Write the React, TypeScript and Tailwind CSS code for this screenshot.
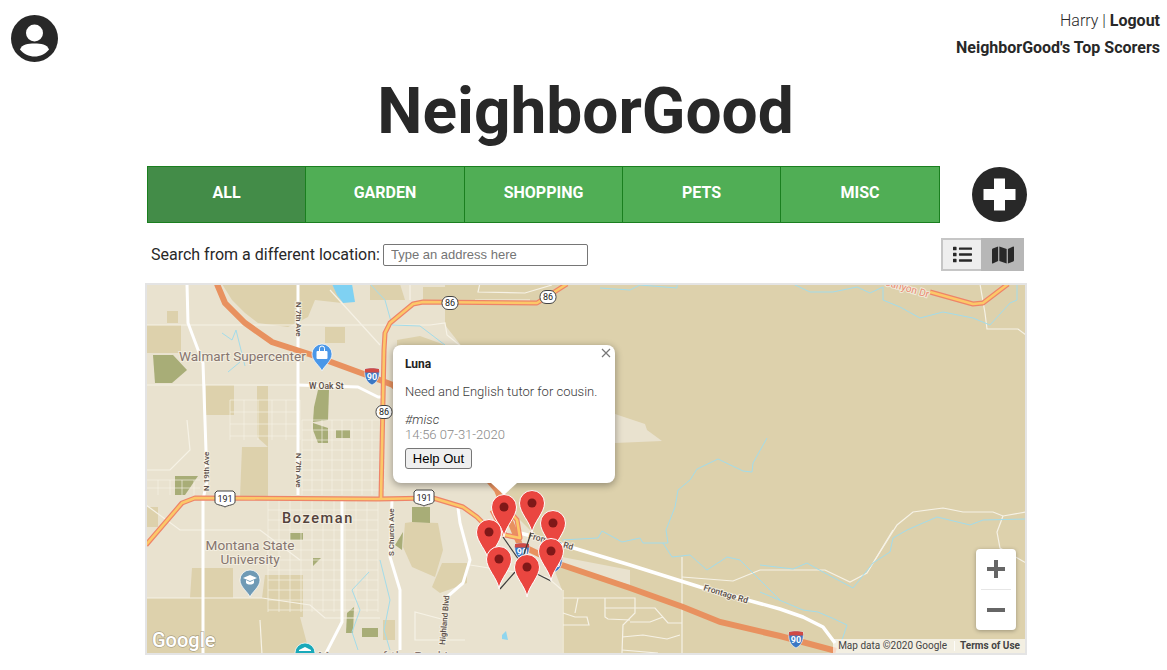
import { FaList, FaMap } from "react-icons/fa";

const CATEGORIES = ["All", "Garden", "Shopping", "Pets", "Misc"];

const TAN = "#ddd1ac";
const LIGHT = "#e9e2cf";
const PARK = "#a8ad77";
const MINOR = "#f6f2e6";
const WATER = "#a3dcea";

const line = (pts: number[][]) => "M" + pts.map((p) => p.join(" ")).join("L");

// street grid for a block of the town
const grid = (x0: number, x1: number, y0: number, y1: number, dx: number, dy: number) => {
  let d = "";
  for (let x = x0; x <= x1; x += dx) d += `M${x} ${y0}V${y1}`;
  for (let y = y0; y <= y1; y += dy) d += `M${x0} ${y}H${x1}`;
  return d;
};

const TAN_AREAS = [
  "222,284 332,284 342,303 315,300 308,317 288,327 258,323 245,313 232,300",
  "370,284 400,284 405,300 370,300",
  "423,287 445,287 445,300 423,300",
  "167,311 178,311 178,323 167,323",
  "147,325 181,325 181,353 147,353",
  "206,385 234,385 234,415 206,415",
  "257,386 268,386 268,447 257,437",
  "242,447 268,447 268,497 240,497",
  "325,327 345,327 345,343 325,343",
  "146,507 158,507 158,527 146,527",
  "192,568 233,568 233,598 262,598 265,575 303,575 303,617 300,617 310,655 146,655 146,598 190,598",
  "405,523 412,522 438,523 443,550 435,577 412,567 403,547",
  "442,563 467,563 467,583 440,593 432,587",
  "397,340 420,336 445,345 445,355 397,355",
  "383,620 395,620 395,640 383,640",
];

const PARKS = [
  "153,355 173,355 187,370 172,383 155,383",
  "318,390 329,390 328,420 313,422 314,407",
  "313,423 328,428 328,443 318,443 313,430",
  "336,430 350,430 350,438 336,438",
  "175,476 198,476 185,495 175,495",
  "290,533 303,533 303,540 290,540",
  "313,558 321,558 313,566",
  "346,633 347,613 354,607 353,633",
  "362,628 378,628 378,637 362,637",
  "412,507 430,507 430,523 412,522",
  "395,545 403,532 402,550",
];

const WATER_LINES = [
  [[767,438],[753,463],[752,472],[743,471],[718,459],[697,469],[690,480],[678,490],[675,507],[666,530],[668,543],[663,543]],
  [[562,540],[598,538],[602,531],[622,542],[640,538],[643,543],[663,543],[672,557],[690,555],[707,570],[727,557],[740,560],[780,600]],
  [[600,288],[630,290],[640,285],[677,288],[677,284]],
  [[793,284],[810,292],[833,292],[857,287],[870,293],[883,287],[883,300],[900,307],[920,318],[943,312],[973,318],[990,325],[1010,303],[1017,300],[1017,284]],
  [[1026,519],[983,520],[970,525],[937,517],[923,523],[907,530],[893,538],[890,552],[873,563],[853,588],[823,572],[807,563],[793,569],[760,565]],
  [[760,592],[803,610],[818,612],[832,618],[847,625],[842,640]],
  [[222,333],[232,340],[236,330],[245,366]],
  [[240,362],[228,372]],
  [[370,284],[385,300],[392,325],[420,326],[445,345]],
  [[369,572],[352,590],[360,610],[352,632],[358,650]],
  [[380,560],[390,600],[384,630],[390,650]],
];

const MINOR_LINES = [
  [[875,560],[897,525],[913,512],[943,508],[963,512],[993,512],[1003,516],[1026,512]],
  [[1003,516],[997,532],[1000,548],[1026,563]],
  [[760,570],[825,570],[850,582],[867,573],[893,530]],
  [[980,284],[985,313],[987,329],[1018,329],[1026,335]],
  [[682,557],[682,653]],
  [[682,577],[733,581],[760,570]],
  [[563,598],[635,598],[635,613],[623,625],[622,653]],
  [[605,598],[605,617],[608,619],[630,620]],
  [[605,608],[655,608],[668,623],[682,623]],
  [[630,622],[650,622],[663,617]],
  [[622,637],[643,635],[667,639],[680,635]],
  [[622,650],[658,653]],
  [[563,613],[575,617],[587,617],[589,625],[563,625]],
  [[578,598],[575,613]],
  [[563,590],[563,653]],
  [[470,565],[547,577],[562,590]],
  [[146,325],[430,325],[445,323],[447,335],[463,348]],
  [[146,385],[298,385]],
  [[146,598],[262,598],[310,605],[325,618],[380,618]],
  [[146,505],[180,530],[260,530],[300,560]],
  [[260,620],[262,655]],
  [[187,420],[190,450],[170,470],[146,470]],
  [[330,290],[380,345]],
  [[480,283],[478,292],[525,293],[552,285]],
  [[475,300],[530,300]],
  [[410,284],[410,300]],
  [[445,620],[415,612],[415,640],[465,640]],
];

const PINS = [
  [532, 503],
  [504, 507],
  [553, 523],
  [489, 532],
  [499, 559],
  [551, 551],
  [527, 567],
];

function Pin({ x, y }: { x: number; y: number }) {
  return (
    <g transform={`translate(${x} ${y})`}>
      <path
        d="M0 30C-1.5 19-12.5 10-12.5 0A12.5 12.5 0 1 1 12.5 0C12.5 10 1.5 19 0 30Z"
        fill="#ea4640"
        stroke="#fff"
        strokeWidth="1"
      />
      <circle r="4.5" fill="#7f1818" />
    </g>
  );
}

function Interstate({ x, y }: { x: number; y: number }) {
  return (
    <g transform={`translate(${x} ${y})`}>
      <path d="M-7-7C-3-8 3-8 7-7C8 0 6 6 0 9C-6 6-8 0-7-7Z" fill="#3b78c4" stroke="#fff" strokeWidth="0.6" />
      <path d="M-7-7C-3-8 3-8 7-7L7.2-3.5H-7.2Z" fill="#cf4a45" />
      <text y="4" textAnchor="middle" fontSize="9" fontWeight="700" fill="#fff">90</text>
    </g>
  );
}

function UsShield({ x, y }: { x: number; y: number }) {
  return (
    <g transform={`translate(${x} ${y})`}>
      <path d="M-10-6L-8-8H8L10-6V3C10 6 3 6 0 8C-3 6-10 6-10 3Z" fill="#fff" stroke="#444" strokeWidth="1" />
      <text y="3" textAnchor="middle" fontSize="9" fill="#222">191</text>
    </g>
  );
}

function StateShield({ x, y }: { x: number; y: number }) {
  return (
    <g transform={`translate(${x} ${y})`}>
      <rect x="-8" y="-6.5" width="16" height="13" rx="6" fill="#fff" stroke="#444" strokeWidth="1" />
      <text y="3" textAnchor="middle" fontSize="9" fill="#222">86</text>
    </g>
  );
}

function Poi({ x, y, color, children }: { x: number; y: number; color: string; children?: React.ReactNode }) {
  return (
    <g transform={`translate(${x} ${y})`}>
      <path d="M0 17C-2 12-10 7-10 0A10 10 0 1 1 10 0C10 7 2 12 0 17Z" fill={color} stroke="#fff" strokeWidth="0.7" />
      {children}
    </g>
  );
}

function Label({ x, y, size, rotate, fill = "#5a4d47", weight = 400, anchor = "start", spacing, children }: {
  x: number;
  y: number;
  size: number;
  rotate?: number;
  fill?: string;
  weight?: number;
  anchor?: "start" | "middle";
  spacing?: number;
  children: string;
}) {
  return (
    <text
      x={x}
      y={y}
      fontSize={size}
      fill={fill}
      fontWeight={weight}
      textAnchor={anchor}
      letterSpacing={spacing}
      transform={rotate ? `rotate(${rotate} ${x} ${y})` : undefined}
      stroke="#f6f2e6"
      strokeOpacity="0.8"
      strokeWidth="2"
      paintOrder="stroke"
    >
      {children}
    </text>
  );
}

function MapDrawing() {
  return (
    <svg viewBox="147 285 878 368" className="block w-full h-full">
      <rect x="147" y="285" width="878" height="368" fill={TAN} />
      <polygon
        points="146,283 445,283 445,325 463,348 490,483 520,520 545,545 562,590 562,655 146,655"
        fill={LIGHT}
      />
      <polygon points="562,557 630,570 630,585 562,565" fill={LIGHT} />
      <polygon points="615,414 645,424 647,430 662,441 615,443" fill={LIGHT} />
      {TAN_AREAS.map((p) => <polygon key={p} points={p} fill={TAN} />)}
      {PARKS.map((p) => <polygon key={p} points={p} fill={PARK} />)}
      <polygon points="332,284 352,284 355,302 343,303 337,295" fill="#7fd1f2" />
      <polygon points="502,635 506,631 508,640 502,639" fill="#8fd5ee" />

      <path
        d={grid(268, 378, 500, 612, 11, 10) + grid(302, 385, 420, 495, 10, 10) + grid(146, 200, 480, 495, 12, 8) + grid(230, 300, 400, 440, 14, 12)}
        stroke={MINOR}
        strokeOpacity="0.65"
        strokeWidth="1"
        fill="none"
      />
      {MINOR_LINES.map((l, i) => (
        <path key={i} d={line(l)} stroke={MINOR} strokeWidth="1.2" fill="none" />
      ))}
      {WATER_LINES.map((l, i) => (
        <path key={i} d={line(l)} stroke={WATER} strokeWidth="1" fill="none" />
      ))}

      {/* arterial roads */}
      <g stroke="#fff" fill="none" strokeWidth="3" strokeLinejoin="round">
        <path d="M298 284V495" />
        <path d="M187 284L188 323L203 363L207 480L203 500V655" />
        <path d="M298 385L358 387L378 397H383" />
        <path d="M342 500V622L325 655" />
        <path d="M392 500L390 557L400 590V650" />
        <path d="M458 508L460 523L470 560L463 583L447 597" />
        <path d="M520 533L547 540L630 565L700 587L780 609L803 617L823 627L835 643" strokeWidth="3.5" />
      </g>

      {/* interstate */}
      <path
        d="M217 284L225 303L245 323L272 342L312 355L372 377L393 385L480 470L497 490L520 545L562 565L630 588L683 607L720 622L780 636L836 651"
        stroke="#e8915f"
        strokeWidth="6"
        fill="none"
      />

      {/* highways */}
      <g fill="none" strokeLinejoin="round">
        {["#ee8468", "#fcc868"].map((c, i) => (
          <g key={c} stroke={c} strokeWidth={i ? 2.6 : 5}>
            <path d="M381 498L384 350L385 333L390 323L413 304L423 302L537 303L567 284" />
            <path d="M146 545L182 503L195 498L378 499L433 498L463 507L477 517L490 530" />
            <path d="M930 292L973 304L983 303L1008 284" />
            <path d="M492 510L505 535L520 538L517 520L510 512" />
          </g>
        ))}
      </g>

      <Label x={179} y={361} size={13.5} fill="#86756f">Walmart Supercenter</Label>
      <Label x={309} y={389} size={8.5} weight={500}>W Oak St</Label>
      <Label x={296} y={302} size={8} rotate={90} weight={500}>N 7th Ave</Label>
      <Label x={296} y={453} size={8} rotate={90} weight={500}>N 7th Ave</Label>
      <Label x={209} y={491} size={8} rotate={-90} weight={500}>N 19th Ave</Label>
      <Label x={394} y={556} size={8} rotate={-90} weight={500}>S Church Ave</Label>
      <Label x={445} y={645} size={8} rotate={-85} weight={500}>Highland Blvd</Label>
      <Label x={282} y={523} size={14.5} weight={500} spacing={1.6} fill="#54423c">Bozeman</Label>
      <Label x={250} y={550} size={13.6} anchor="middle" fill="#86756f">Montana State</Label>
      <Label x={250} y={564} size={13.6} anchor="middle" fill="#86756f">University</Label>
      <Label x={318} y={661} size={13} fill="#86756f" spacing={0.4}>Museum of the Rockies</Label>
      <Label x={703} y={590} size={8.5} rotate={17} weight={500}>Frontage Rd</Label>
      <Label x={528} y={538} size={8.5} rotate={15} weight={500}>Frontage Rd</Label>
      <Label x={884} y={285} size={10} rotate={16} fill="#e98a70">Canyon Dr</Label>

      <Interstate x={372} y={376} />
      <Interstate x={522} y={551} />
      <Interstate x={555} y={563} />
      <Interstate x={796} y={639} />
      <UsShield x={225} y={499} />
      <UsShield x={424} y={498} />
      <StateShield x={384} y={412} />
      <StateShield x={450} y={303} />
      <StateShield x={548} y={297} />

      <Poi x={322} y={354} color="#4a97e8">
        <rect x="-5.5" y="-3" width="11" height="8" rx="1" fill="#fff" />
        <path d="M-2.5-3V-5.5A2.5 2.5 0 0 1 2.5-5.5V-3" fill="none" stroke="#fff" strokeWidth="1" />
      </Poi>
      <Poi x={250} y={580} color="#6f9ab5">
        <path d="M-7-2L0-5L7-2L0 1Z" fill="#fff" />
        <path d="M-4 0V3C-2 5 2 5 4 3V0L0 2Z" fill="#fff" />
      </Poi>
      <Poi x={305} y={653} color="#19a9b9">
        <path d="M-6-3L0-6L6-3V-2H-6Z" fill="#fff" />
      </Poi>

      <g stroke="#3d3d3d" strokeWidth="1.2">
        <path d="M503 537L519 560" />
        <path d="M531 533L522 560" />
        <path d="M500 589L515 572" />
        <path d="M551 581L535 573" />
      </g>
      {PINS.map(([x, y]) => <Pin key={`${x}-${y}`} x={x} y={y} />)}

      <text
        x={152}
        y={647}
        fontSize={20}
        fontWeight={500}
        fill="#fff"
        stroke="#6b6350"
        strokeOpacity="0.45"
        strokeWidth="1.4"
        paintOrder="stroke"
      >
        Google
      </text>
    </svg>
  );
}

function InfoWindow() {
  return (
    <div className="absolute left-[246px] top-[60px] w-[222px] h-[138px] bg-white rounded-lg shadow-[0_2px_7px_1px_rgba(0,0,0,0.3)] px-3 pt-3 text-[13px]">
      <div className="absolute left-[98px] top-full w-0 h-0 border-x-[13px] border-x-transparent border-t-[12px] border-t-white" />
      <button className="absolute right-[3px] top-[2px] w-3 h-3 text-[#777]" aria-label="Close">
        <svg viewBox="0 0 12 12" className="w-3 h-3">
          <path d="M2 2L10 10M10 2L2 10" stroke="currentColor" strokeWidth="1.2" />
        </svg>
      </button>
      <p className="text-xs font-bold leading-[14px] text-[#222]">Luna</p>
      <p className="mt-[13px] leading-[15px] font-light text-[#3a3a3a]">Need and English tutor for cousin.</p>
      <p className="mt-[13px] leading-[15px] italic font-light text-[#3a3a3a]">#misc</p>
      <p className="leading-[15px] font-light text-[#888]">14:56 07-31-2020</p>
      <button className="block mt-[6px] w-[67px] h-[21px] bg-[#efefef] border border-[#767676] rounded-[3px] text-[13px] leading-none text-black font-['Liberation_Sans',sans-serif]">
        Help Out
      </button>
    </div>
  );
}

export default function App() {
  return (
    <div className="w-[1167px] h-[670px] overflow-hidden bg-white text-[#282828] font-[Roboto,sans-serif]">
      <header className="flex justify-between h-[75px]">
        <svg viewBox="0 0 47 47" className="w-[47px] h-[47px] ml-[11px] mt-[15px]">
          <circle cx="23.5" cy="23.5" r="23.5" fill="#282828" />
          <circle cx="23.5" cy="18" r="8.5" fill="#fff" />
          <path d="M9 34.5C11 29 17 28.5 23.5 28.5C30 28.5 36 29 38 34.5C34.5 39 29 41.5 23.5 41.5C18 41.5 12.5 39 9 34.5Z" fill="#fff" />
        </svg>
        <div className="pt-[9px] pr-[7px] text-right text-base leading-6">
          <p className="font-light">Harry | <span className="font-bold">Logout</span></p>
          <p className="mt-[3px] font-bold">NeighborGood's Top Scorers</p>
        </div>
      </header>

      <h1 className="pl-1 text-center text-[64px] leading-[74px] font-bold">NeighborGood</h1>

      <div className="w-[882px] ml-[145px] mt-[17px]">
        <div className="flex items-center pl-[2px]">
          <nav className="grid grid-cols-[158px_159px_158px_158px_158px] w-[793px] h-[57px] border border-[#1a7f1f] divide-x divide-[#1a7f1f]">
            {CATEGORIES.map((name) => (
              <a
                key={name}
                className={`flex items-center justify-center pb-[3px] text-base font-bold uppercase text-white ${
                  name === "All" ? "bg-[#438c48]" : "bg-[#50ae55]"
                }`}
              >
                {name}
              </a>
            ))}
          </nav>
          <svg viewBox="0 0 55 55" className="w-[55px] h-[55px] ml-[32px]">
            <circle cx="27.5" cy="27.5" r="27.5" fill="#282828" />
            <path d="M22 11.5H33V22H43.5V33H33V43.5H22V33H11.5V22H22Z" fill="#fff" />
          </svg>
        </div>

        <div className="flex items-center justify-between mt-[15px] h-[33px] pl-[6px] pr-[3px]">
          <label className="flex items-center gap-[3px] text-base">
            Search from a different location:
            <input
              placeholder="Type an address here"
              className="w-[205px] h-[22px] px-[7px] bg-white border border-[#767676] rounded-[2px] text-[13px] placeholder:text-[#757575] font-['Liberation_Sans',sans-serif]"
            />
          </label>
          <div className="flex w-[83px] h-[33px] border-2 border-[#c6c6c6] text-[#282828]">
            <div className="flex flex-1 items-center justify-center bg-[#eeeeee]">
              <FaList className="w-[19px] h-[19px]" />
            </div>
            <div className="flex w-[43px] -my-[2px] -mr-[2px] items-center justify-center bg-[#b7b7b7]">
              <FaMap className="w-[22px] h-[20px]" />
            </div>
          </div>
        </div>

        <div className="relative w-[882px] h-[372px] mt-3 border-2 border-[#e4e4e4] overflow-hidden">
          <MapDrawing />
          <InfoWindow />
          <div className="absolute left-[829px] top-[264px] flex flex-col items-center w-10 h-[81px] bg-white rounded-sm shadow-[0_1px_4px_rgba(0,0,0,0.3)]">
            <svg viewBox="0 0 40 40" className="w-10 h-10">
              <path d="M20 11V29M11 20H29" stroke="#666" strokeWidth="4" />
            </svg>
            <div className="w-[30px] h-px bg-[#e6e6e6]" />
            <svg viewBox="0 0 40 40" className="w-10 h-10">
              <path d="M11 20H29" stroke="#666" strokeWidth="4" />
            </svg>
          </div>
          <div className="absolute right-0 bottom-0 flex h-[14px] items-center bg-white/65 text-[10px] leading-none text-[#444]">
            <span className="pl-[5px] pr-[7px] border-r border-white/80">Map data ©2020 Google</span>
            <span className="pl-[5px] pr-[5px] font-bold">Terms of Use</span>
          </div>
        </div>
      </div>
    </div>
  );
}
